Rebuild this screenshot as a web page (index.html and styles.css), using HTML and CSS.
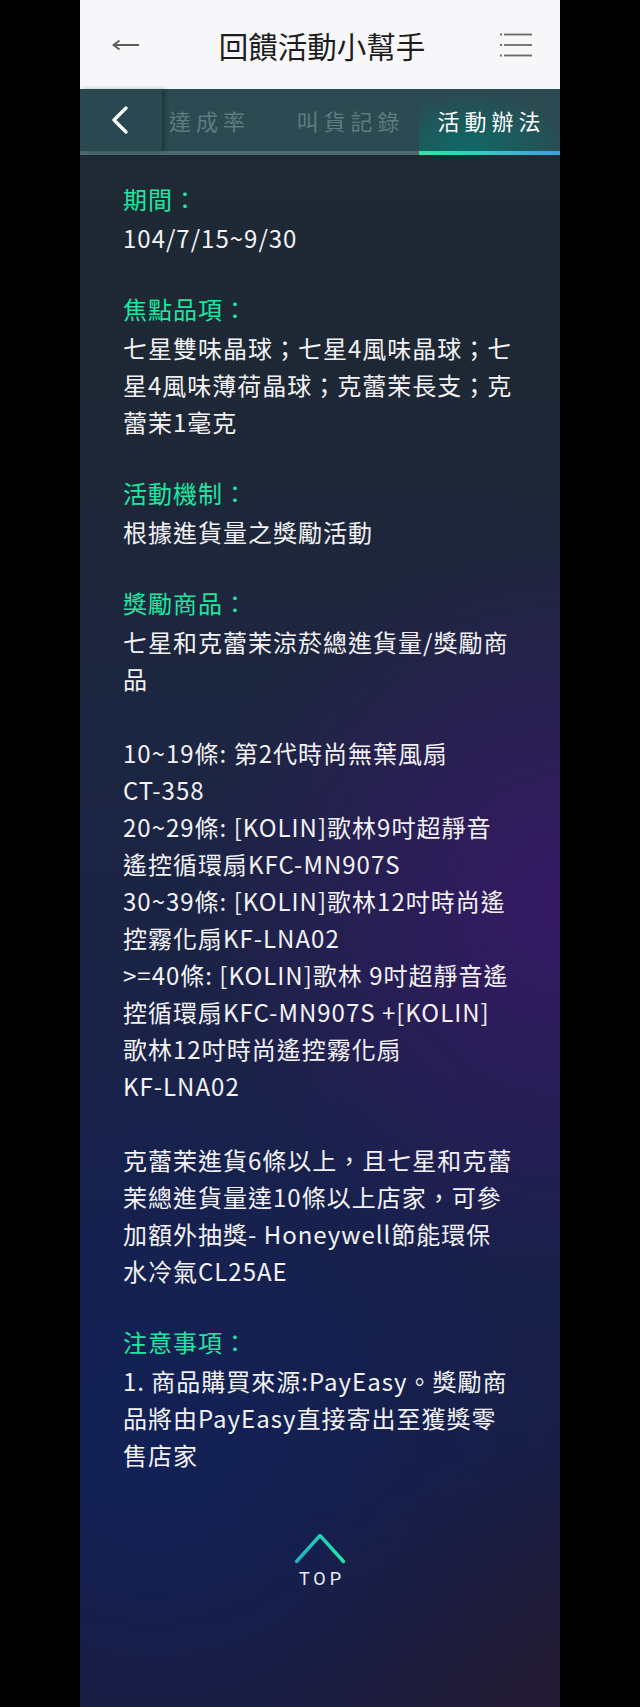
FILE: index.html
```html
<!DOCTYPE html>
<html lang="zh-Hant">
<head>
<meta charset="utf-8">
<title>回饋活動小幫手</title>
<link rel="stylesheet" href="styles.css">
</head>
<body>
<div class="page">
  <header class="appbar">
    <button class="icon-btn back" aria-label="返回">
      <svg width="28" height="12" viewBox="0 0 28 12"><path d="M1.5 6H27M7.5 1.5L1.5 6L7.5 10.5" fill="none" stroke="#5c5c5c" stroke-width="1.8" stroke-linejoin="miter"/></svg>
    </button>
    <h1 class="title">回饋活動小幫手</h1>
    <button class="icon-btn menu" aria-label="選單">
      <svg width="32" height="24" viewBox="0 0 32 24">
        <g fill="#6a6a6a">
          <rect x="0" y="0.5" width="2" height="2"/><rect x="4" y="0.6" width="28" height="1.8"/>
          <rect x="0" y="11" width="2" height="2"/><rect x="4" y="11.1" width="28" height="1.8"/>
          <rect x="0" y="21.5" width="2" height="2"/><rect x="4" y="21.6" width="28" height="1.8"/>
        </g>
      </svg>
    </button>
  </header>

  <nav class="tabbar">
    <button class="tab-back" aria-label="上一頁">
      <svg width="18" height="28" viewBox="0 0 18 28"><path d="M15 2L3 14L15 26" fill="none" stroke="#ffffff" stroke-width="3.2" stroke-linecap="round" stroke-linejoin="round"/></svg>
    </button>
    <div class="tabs">
      <a class="tab">達成率</a>
      <a class="tab">叫貨記錄</a>
      <a class="tab active">活動辦法</a>
    </div>
  </nav>

  <main class="content">
    <section class="sec">
      <h2 class="sec-title">期間：</h2>
      <p>104/7/15~9/30</p>
    </section>
    <section class="sec">
      <h2 class="sec-title">焦點品項：</h2>
      <p>七星雙味晶球；七星4風味晶球；七<br>星4風味薄荷晶球；克蕾茉長支；克<br>蕾茉1毫克</p>
    </section>
    <section class="sec">
      <h2 class="sec-title">活動機制：</h2>
      <p>根據進貨量之獎勵活動</p>
    </section>
    <section class="sec">
      <h2 class="sec-title">獎勵商品：</h2>
      <p>七星和克蕾茉涼菸總進貨量/獎勵商<br>品</p>
      <p class="gap">10~19條: 第2代時尚無葉風扇<br>CT-358<br>20~29條: [KOLIN]歌林9吋超靜音<br>遙控循環扇KFC-MN907S<br>30~39條: [KOLIN]歌林12吋時尚遙<br>控霧化扇KF-LNA02<br>&gt;=40條: [KOLIN]歌林 9吋超靜音遙<br>控循環扇KFC-MN907S +[KOLIN]<br>歌林12吋時尚遙控霧化扇<br>KF-LNA02</p>
      <p class="gap">克蕾茉進貨6條以上，且七星和克蕾<br>茉總進貨量達10條以上店家，可參<br>加額外抽獎- Honeywell節能環保<br>水冷氣CL25AE</p>
    </section>
    <section class="sec">
      <h2 class="sec-title">注意事項：</h2>
      <p>1. 商品購買來源:PayEasy。獎勵商<br>品將由PayEasy直接寄出至獲獎零<br>售店家</p>
    </section>
  </main>

  <a class="to-top" href="#">
    <svg width="52" height="32" viewBox="0 0 52 32">
      <defs>
        <linearGradient id="topg" x1="0" y1="0" x2="1" y2="0">
          <stop offset="0" stop-color="#1eb2c8"/>
          <stop offset="1" stop-color="#1fe8a2"/>
        </linearGradient>
      </defs>
      <path d="M2.5 29.5L26 3.5L49.5 29.5" fill="none" stroke="url(#topg)" stroke-width="3.4" stroke-linecap="round" stroke-linejoin="round"/>
    </svg>
    <span class="top-label">TOP</span>
  </a>
</div>
</body>
</html>
```

FILE: styles.css
```css
html, body {
  margin: 0;
  padding: 0;
  background: #000;
}

body {
  font-family: "Noto Sans CJK TC", "Noto Sans", sans-serif;
}

.page {
  width: 480px;
  min-height: 1707px;
  margin: 0 auto;
  display: flex;
  flex-direction: column;
  background:
    radial-gradient(ellipse 75% 22% at 100% 53%, rgba(62, 22, 112, 0.75), rgba(62, 22, 112, 0) 100%),
    radial-gradient(ellipse 90% 25% at 15% 86%, rgba(16, 34, 92, 0.75), rgba(16, 34, 92, 0) 100%),
    radial-gradient(ellipse 70% 15% at 100% 100%, rgba(36, 27, 52, 0.9), rgba(36, 27, 52, 0) 100%),
    linear-gradient(180deg, #1f2a34 0%, #1e2835 22%, #1c2542 45%, #19214a 70%, #181e46 85%, #1d1b39 100%);
}

/* ---------- app bar ---------- */
.appbar {
  height: 89px;
  background: #f7f7f9;
  display: grid;
  grid-template-columns: 1fr auto 1fr;
  align-items: center;
  padding: 0 28px 0 32px;
  box-sizing: border-box;
}

.icon-btn {
  border: 0;
  background: none;
  padding: 0;
  display: flex;
  align-items: center;
  cursor: pointer;
}

.icon-btn.back { justify-self: start; margin-top: 1px; }
.icon-btn.menu { justify-self: end; margin-top: 1px; }

.title {
  margin: 0;
  font-weight: 400;
  font-size: 29.5px;
  line-height: 40px;
  color: #1d1d1d;
}

/* ---------- tab bar ---------- */
.tabbar {
  position: relative;
  display: flex;
  height: 62px;
  background: #2b4a51;
  border-bottom: 4px solid #4b6970;
}

.tab-back {
  position: relative;
  z-index: 2;
  flex: 0 0 82px;
  border: 0;
  padding: 0;
  background: #29484f;
  box-shadow: 3px 0 4px rgba(0, 0, 0, 0.28);
  display: flex;
  align-items: center;
  justify-content: center;
  cursor: pointer;
}

.tab-back svg { margin-left: -2px; }

.tabs {
  display: flex;
  margin-left: -25px;
}

.tab {
  position: relative;
  flex: 0 0 141px;
  display: flex;
  align-items: center;
  justify-content: center;
  font-size: 22px;
  letter-spacing: 5px;
  color: #5e7c82;
  padding-left: 4px;
  box-sizing: border-box;
}

.tab.active {
  color: #ffffff;
  background: radial-gradient(ellipse 75% 95% at 35% 100%, rgba(8, 112, 108, 0.85), rgba(8, 112, 108, 0) 100%);
}

.tab.active::after {
  content: "";
  position: absolute;
  left: 0;
  right: 0;
  bottom: -4px;
  height: 4px;
  background: linear-gradient(90deg, #2ee8a0, #34c6c4 50%, #3a9fe2);
}

/* ---------- content ---------- */
.content {
  padding: 25px 30px 0 43px;
  color: #f2f2f4;
  font-size: 24px;
  line-height: 37px;
  letter-spacing: 1px;
}

.sec { margin-bottom: 34px; }
.sec:last-child { margin-bottom: 0; }

.sec-title {
  margin: 0 0 2px;
  font-size: 24px;
  font-weight: 400;
  line-height: 37px;
  color: #20e6a0;
}

.content p { margin: 0; }
.content p.gap { margin-top: 37px; }

/* ---------- back to top ---------- */
.to-top {
  align-self: center;
  display: flex;
  flex-direction: column;
  align-items: center;
  margin-top: 59px;
  text-decoration: none;
}

.top-label {
  margin-top: 4px;
  font-family: Roboto, "Noto Sans", sans-serif;
  font-size: 18px;
  line-height: 21px;
  letter-spacing: 4px;
  padding-left: 4px;
  color: #ececf2;
}
```
